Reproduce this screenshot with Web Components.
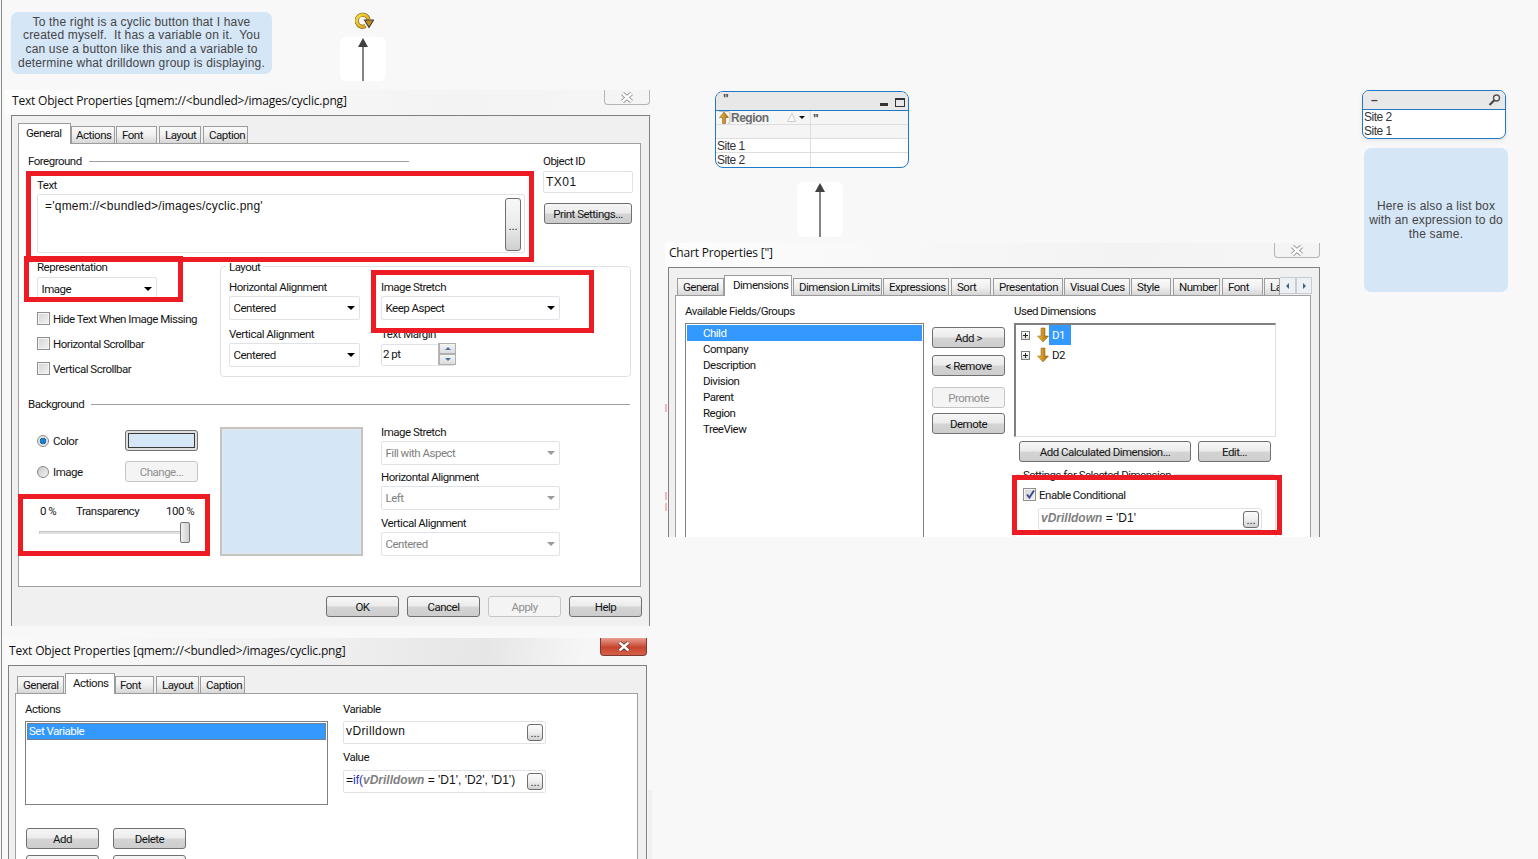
<!DOCTYPE html>
<html><head><meta charset="utf-8"><title>Cyclic</title>
<style>html,body{margin:0;padding:0;background:#f8f8f8}</style></head>
<body><q-page></q-page>
<script>
const B=':host{box-sizing:border-box}*{box-sizing:border-box}';
function def(name,fn){customElements.define(name,class extends HTMLElement{connectedCallback(){if(this.shadowRoot)return;const r=this.attachShadow({mode:'open'});r.innerHTML=fn(this)}})}
const esc=s=>s.replace(/&/g,'&amp;').replace(/</g,'&lt;').replace(/>/g,'&gt;');
const GOLD=`<defs><linearGradient id="g" x1="0" x2="1"><stop offset="0" stop-color="#f0c040"/><stop offset="1" stop-color="#a8680c"/></linearGradient></defs>`;
def('q-label',()=>`<style>${B}:host{display:block;height:14px;line-height:14px;white-space:nowrap}</style><slot></slot>`);
def('q-btn',e=>`<style>${B}:host{display:flex;align-items:center;justify-content:center;width:73px;height:21px;border:1px solid #707070;border-radius:3px;background:linear-gradient(#f6f6f6,#ececec 45%,#d4d4d4 55%,#cdcdcd);white-space:nowrap;flex:none}
:host([disabled]){border-color:#c6c6c6;background:#f4f4f4;color:#8f8f8f}</style><slot></slot>`);
def('q-dots',()=>`<style>${B}:host{display:flex;align-items:flex-end;justify-content:center;width:16px;height:17px;border:1px solid #6f6f6f;border-radius:3px;background:linear-gradient(#fbfbfb,#eee 50%,#d0d0d0);font:11px/11px "Liberation Sans",sans-serif;letter-spacing:0;color:#222;padding-bottom:1px;flex:none}</style>...`);
def('q-select',()=>`<style>${B}:host{display:flex;align-items:center;justify-content:space-between;height:24px;border:1px solid #dfe3e8;border-radius:2px;background:#fff;padding:0 4px 1px 3.5px;flex:none}
i{width:0;height:0;border:4px solid transparent;border-top:4px solid #000;border-bottom:0;margin-top:1px}
:host([disabled]){color:#7f7f7f}:host([disabled]) i{border-top-color:#9a9a9a}</style><span><slot></slot></span><i></i>`);
def('q-input',()=>`<style>${B}:host{display:flex;align-items:center;justify-content:space-between;height:22px;border:1px solid #dfe3e8;border-radius:2px;background:#fff;padding:0 2px;flex:none}</style><span><slot></slot></span><slot name="end"></slot>`);
def('q-check',e=>`<style>${B}:host{display:flex;align-items:center;height:13px;gap:3px;white-space:nowrap}
b{display:block;width:13px;height:13px;border:1px solid #8e8f8f;background:linear-gradient(135deg,#d4d4d4,#f2f2f2);box-shadow:inset 0 0 0 1px #f4f4f4;flex:none;position:relative}
svg{position:absolute;left:1px;top:0}</style><b><svg width="11" height="11" viewBox="0 0 11 11" style="display:${e.hasAttribute('checked')?'block':'none'}"><path d="M2 5.5l2.4 3L9 1.5" fill="none" stroke="#3e4e96" stroke-width="2"/></svg></b><slot></slot>`);
def('q-radio',e=>`<style>${B}:host{display:flex;align-items:center;gap:4px;white-space:nowrap}
b{display:block;width:12px;height:12px;border:1px solid #8a8a8a;border-radius:50%;background:${e.hasAttribute('checked')?'radial-gradient(circle,#1f7fc4 0 2.6px,#0b4f86 3px,#e4e4e4 3.6px,#f4f4f4)':'linear-gradient(135deg,#c8c8c8,#f4f4f4)'};flex:none}</style><b></b><slot></slot>`);
def('q-heading',()=>`<style>${B}:host{display:flex;align-items:center;height:14px;gap:7px;white-space:nowrap}i{flex:1;height:1px;background:#a0a0a0}</style><slot></slot><i></i>`);
def('q-tab',()=>`<style>${B}:host{display:flex;align-items:center;height:18px;padding-left:5px;border:1px solid #9c9c9c;background:linear-gradient(#fafafa,#f0f0f0 50%,#d6d6d6);white-space:nowrap;overflow:hidden;flex:none}
:host([active]){height:21px;background:#fff;border-bottom:0;padding-bottom:3px}</style><slot></slot>`);
def('q-red',()=>`<style>${B}:host{display:block;position:absolute;border:5px solid #ed1c24;z-index:5;pointer-events:none}</style>`);
def('q-arrowbox',()=>`<style>${B}:host{display:block;position:absolute;background:#fff;border-radius:6px}
svg{display:block;width:100%;height:100%}</style><svg><line x1="50%" y1="8" x2="50%" y2="100%" stroke="#333" stroke-width="1.2"/><polygon points="23,1 18,10 28,10" fill="#404040"/></svg>`);
def('q-note',()=>`<style>${B}:host{display:flex;position:absolute;align-items:center;justify-content:center;text-align:center;background:#d5e6f7;border-radius:7px;color:#444;font:12px/13.7px "Liberation Sans",sans-serif;letter-spacing:.18px;white-space:nowrap}</style><div><slot></slot></div>`);
def('q-win',e=>`<style>${B}:host{display:block;position:absolute;overflow:hidden}
.t{display:flex;justify-content:space-between;align-items:flex-start;height:var(--th,25px);background:var(--tb,linear-gradient(100deg,#fdfdfd,#f3f3f3 70%,#f6f6f6));padding-left:var(--tl,7px)}
.n{font:12px/var(--lh,22px) "Open Sans",sans-serif;letter-spacing:var(--ts,-.2px);white-space:nowrap;color:#111;padding-top:var(--tp,0)}
.c{width:46px;height:15px;border:1px solid #b4b4b4;border-top:0;border-radius:0 0 4px 4px;background:#f4f4f4;display:flex;align-items:center;justify-content:center;flex:none}
:host([red]) .c{width:47px;height:18px;border-color:#7a3a30;background:linear-gradient(#e8a090,#c8452f 55%,#d8604c)}
.b{margin-left:var(--bl,6px);border:1px solid #808080;background:#f0f0f0;padding:7px 0 0 6px;height:100%}</style>
<div class="t"><div class="n">${esc(e.getAttribute('name'))}</div><div class="c"><svg width="14" height="11" viewBox="0 0 14 11"><path d="M2.5 1.5l9 8M11.5 1.5l-9 8" stroke="${e.hasAttribute('red')?'#7a2a20':'#8a8a8a'}" stroke-width="4.2"/><path d="M2.5 1.5l9 8M11.5 1.5l-9 8" stroke="#fff" stroke-width="2.4" fill="none"/></svg></div></div>
<div class="b"><slot></slot></div>`);
const FORM=`*{box-sizing:border-box}
:host{display:block}
.tabs{display:flex;align-items:flex-end;height:21px;margin-bottom:-1px;position:relative;z-index:1}
.panel{background:#fff;border:1px solid #a0a0a0;position:relative}
.row{display:flex;align-items:flex-start}.col{display:flex;flex-direction:column;align-items:flex-start;flex:none}
.ar{font:12px "Liberation Sans",sans-serif;letter-spacing:0}
.up{display:block;padding-bottom:3px}
.exp i{font-weight:bold;color:#808080;font-style:italic}`;
const ARROW=`<svg width="12" height="16" viewBox="0 0 12 16" style="flex:none"><path d="M4 1h4v8h3.5L6 15 .5 9H4z" fill="url(#g)" stroke="#8a5a10" stroke-width=".5"/></svg>`;
def('q-textgeneral',()=>`<style>${FORM}
.panel{width:623px;height:444px;padding:10px 0 0 9px}
.grp{position:relative;width:411px;height:111px;margin-top:6px;border:1px solid #dde1e6;border-radius:4px;padding:13px 0 0 8px}
.lg{position:absolute;left:5px;top:-7px;background:#fff;padding:0 3px}
.prev{width:143px;height:129px;margin-top:16px;border:2px solid #c4c4c4;background:#d5e6f7;box-shadow:inset 0 0 0 1px #e6e6e6}
.swatch{width:73px;height:21px;border:1px solid #707070;border-radius:3px;background:#e0e0e0;padding:2px}
.swatch b{display:block;height:100%;background:#d5e6f7;border:1px solid #3a3a3a}
.slider{position:relative;width:151px;height:21px;margin-top:4px;display:flex;align-items:center}
.slider u{display:block;width:100%;height:3px;background:#e4e4e4;border:1px solid #c4c4c4;border-bottom-color:#ddd}
.slider s{position:absolute;left:141px;top:0;width:10px;height:21px;border:1px solid #777;border-radius:2px;background:linear-gradient(90deg,#f0f0f0,#d0d0d0)}
.spin{display:flex;flex-direction:column;width:18px;height:22px;border-left:1px solid #b8b8b8;margin-right:-2px}
.spin b{flex:1;border:1px solid #b0b0b0;background:linear-gradient(#f4f4f4,#dcdcdc);display:flex;align-items:center;justify-content:center}
.spin i{width:0;height:0;border:3px solid transparent}
.foot{display:flex;justify-content:flex-end;gap:8px;width:624px;margin-top:9px}
</style>
<div class="tabs"><q-tab active style="width:53px;padding-left:7px">General</q-tab><q-tab style="width:44px;padding-left:4px">Actions</q-tab><q-tab style="width:41px;margin-left:1px;">Font</q-tab><q-tab style="width:42px;margin-left:2px">Layout</q-tab><q-tab style="width:45px;margin-left:2px">Caption</q-tab></div>
<div class="panel">
 <div class="row">
  <div class="col" style="width:515px">
   <q-heading style="width:381px">Foreground</q-heading>
   <q-label style="margin:10px 0 0 9px">Text</q-label>
   <div class="ar" style="margin:2px 0 0 9px;width:488px;height:59px;border:1px solid #dfe3e8;border-radius:2px;display:flex;justify-content:space-between;padding:3px 3px 3px 7px"><span style="padding-top:1px;letter-spacing:.22px">='qmem://&lt;bundled&gt;/images/cyclic.png'</span><q-dots style="height:53px;width:16px;align-items:center;padding:4px 0 0;background:linear-gradient(#f8f8f8,#ececec 50%,#cfcfcf)"></q-dots></div>
  </div>
  <div class="col">
   <q-label>Object ID</q-label>
   <q-input class="ar" style="width:90px;margin-top:3px;letter-spacing:.5px">TX01</q-input>
   <q-btn style="width:88px;margin:10px 0 0 1px">Print Settings...</q-btn>
  </div>
 </div>
 <div class="row" style="margin:7px 0 0 9px">
  <div class="col" style="width:183px">
   <q-label>Representation</q-label>
   <q-select style="width:120px;margin-top:3px">Image</q-select>
   <q-check style="margin-top:11px">Hide Text When Image Missing</q-check>
   <q-check style="margin-top:12px">Horizontal Scrollbar</q-check>
   <q-check style="margin-top:12px">Vertical Scrollbar</q-check>
  </div>
  <div class="grp">
   <q-label class="lg">Layout</q-label>
   <div class="row">
    <div class="col" style="width:152px">
     <q-label>Horizontal Alignment</q-label><q-select style="width:131px;margin-top:2px">Centered</q-select>
     <q-label style="margin-top:7px">Vertical Alignment</q-label><q-select style="width:131px;margin-top:2px">Centered</q-select>
    </div>
    <div class="col">
     <q-label>Image Stretch</q-label><q-select style="width:179px;margin-top:2px">Keep Aspect</q-select>
     <q-label style="margin-top:7px">Text Margin</q-label>
     <q-input style="width:74px;margin-top:3px;padding:0 0 2px 1px">2 pt<span slot="end" class="spin"><b><i style="border-bottom-color:#4a6ea8;border-top:0"></i></b><b><i style="border-top-color:#4a6ea8;border-bottom:0"></i></b></span></q-input>
    </div>
   </div>
  </div>
 </div>
 <q-heading style="width:602px;margin-top:20px">Background</q-heading>
 <div class="row" style="margin-left:9px">
  <div class="col" style="width:183px">
   <div class="row" style="margin-top:19px;align-items:center;width:161px;justify-content:space-between"><q-radio checked>Color</q-radio><div class="swatch"><b></b></div></div>
   <div class="row" style="margin-top:10px;align-items:center;width:161px;justify-content:space-between"><q-radio>Image</q-radio><q-btn disabled>Change...</q-btn></div>
   <div class="row" style="margin:22px 0 0 3px"><q-label style="width:36px">0 %</q-label><q-label style="width:90px">Transparency</q-label><q-label>100 %</q-label></div>
   <div class="slider" style="margin-left:2px"><u></u><s></s></div>
  </div>
  <div class="prev"></div>
  <div class="col" style="margin:14px 0 0 18px">
   <q-label>Image Stretch</q-label><q-select disabled style="width:179px;margin-top:2px">Fill with Aspect</q-select>
   <q-label style="margin-top:5px">Horizontal Alignment</q-label><q-select disabled style="width:179px;margin-top:2px">Left</q-select>
   <q-label style="margin-top:6px">Vertical Alignment</q-label><q-select disabled style="width:179px;margin-top:2px">Centered</q-select>
  </div>
 </div>
</div>
<div class="foot"><q-btn>OK</q-btn><q-btn>Cancel</q-btn><q-btn disabled>Apply</q-btn><q-btn>Help</q-btn></div>`);
def('q-textactions',()=>`<style>${FORM}
.panel{width:623px;height:240px;padding:8px 0 0 9px}
.lb{width:303px;height:84px;margin-top:5px;border:1px solid #808080;padding:1px}
.sel{height:17px;background:#3399ff;color:#fff;outline:1px dotted #b56a2a;outline-offset:-1px;padding-left:2px;line-height:16px}
</style>
<div class="tabs" style="margin-left:2px"><q-tab style="width:47px">General</q-tab><q-tab active style="width:50px;margin-left:1px;padding-left:7px">Actions</q-tab><q-tab style="width:39px;padding-left:4px">Font</q-tab><q-tab style="width:43px;margin-left:2px">Layout</q-tab><q-tab style="width:45px;margin-left:1px">Caption</q-tab></div>
<div class="panel"><div class="row">
 <div class="col">
  <q-label>Actions</q-label>
  <div class="lb"><div class="sel">Set Variable</div></div>
  <div class="row" style="margin:23px 0 0 1px;gap:14px"><q-btn>Add</q-btn><q-btn>Delete</q-btn></div>
  <div class="row" style="margin:6px 0 0 1px;gap:14px"><q-btn></q-btn><q-btn></q-btn></div>
 </div>
 <div class="col" style="margin-left:15px">
  <q-label>Variable</q-label>
  <q-input class="ar" style="width:203px;height:23px;margin-top:5px;padding-right:2px;letter-spacing:.4px"><span class="up">vDrilldown</span><q-dots slot="end"></q-dots></q-input>
  <q-label style="margin-top:6px">Value</q-label>
  <q-input class="ar exp" style="width:203px;height:23px;margin-top:6px;padding-right:2px"><span class="up">=<span style="color:#2a2ad0">if(</span><i>vDrilldown</i> = 'D1', 'D2', 'D1')</span><q-dots slot="end"></q-dots></q-input>
 </div>
</div></div>`);
def('q-chartdims',()=>`<style>${FORM}
.panel{width:636px;height:260px;padding:8px 0 0 9px}
.lb{width:239px;height:230px;margin-top:5px;border:1px solid #808080;padding:1px}
.it{height:16px;line-height:16px;padding-left:16px;white-space:nowrap}
.it.s{background:#3399ff;color:#fff}
.used{width:262px;height:114px;margin-top:5px;border:1px solid #e0e0e0;border-top:2px solid #808080;border-left:2px solid #808080;padding:0 0 0 5px}
.node{display:flex;align-items:center;height:20px}
.plus{width:9px;height:9px;border:1px solid #7f7f7f;background:linear-gradient(#fff,#ddd);position:relative;flex:none;margin-right:7px}
.plus:before{content:"";position:absolute;left:1px;top:3px;width:5px;height:1px;background:#222}
.plus:after{content:"";position:absolute;left:3px;top:1px;width:1px;height:5px;background:#222}
.node span{display:flex;align-items:center;height:20px;padding:0 4px 0 3px}
.node .s{background:#3399ff;color:#fff;width:22px}
.sg{position:relative;width:262px;height:80px;margin-top:12px;border:1px solid #dcdcdc;border-radius:3px;padding:13px 0 0 7px}
.lg{position:absolute;left:5px;top:-7px;background:#fff;padding:0 3px}
.ta{width:16px;height:17px;margin:0 0 2px 0;flex:none;border:1px solid #c8ccd2;border-left:0;background:#eef1f4;display:flex;align-items:center;justify-content:center}
.ta i{border:3px solid transparent}
</style>
<div class="tabs" style="margin-left:2px">${GOLD.replace('<defs>','<svg width="0" height="0" style="position:absolute"><defs>').replace('</defs>','</defs></svg>')}<q-tab style="width:47px">General</q-tab><q-tab active style="width:68px;padding-left:8px">Dimensions</q-tab><q-tab style="width:89px;margin-left:1px">Dimension Limits</q-tab><q-tab style="width:66px;margin-left:1px">Expressions</q-tab><q-tab style="width:40px;margin-left:2px">Sort</q-tab><q-tab style="width:70px;margin-left:2px">Presentation</q-tab><q-tab style="width:66px;margin-left:1px">Visual Cues</q-tab><q-tab style="width:40px;margin-left:1px">Style</q-tab><q-tab style="width:47px;margin-left:2px">Number</q-tab><q-tab style="width:41px;margin-left:2px">Font</q-tab><q-tab style="width:16px;margin-left:1px">La</q-tab><div class="ta"><i style="border-right-color:#47607f;border-left:0"></i></div><div class="ta" style="border-left:1px solid #c8ccd2"><i style="border-left-color:#47607f;border-right:0"></i></div></div>
<div class="panel"><div class="row">
 <div class="col">
  <q-label>Available Fields/Groups</q-label>
  <div class="lb"><div class="it s">Child</div><div class="it">Company</div><div class="it">Description</div><div class="it">Division</div><div class="it">Parent</div><div class="it">Region</div><div class="it">TreeView</div></div>
 </div>
 <div class="col" style="margin:23px 0 0 8px">
  <q-btn>Add &gt;</q-btn><q-btn style="margin-top:7px">&lt; Remove</q-btn><q-btn disabled style="margin-top:11px">Promote</q-btn><q-btn style="margin-top:5px">Demote</q-btn>
 </div>
 <div class="col" style="margin-left:9px">
  <q-label>Used Dimensions</q-label>
  <div class="used">
   <div class="node"><b class="plus"></b>${ARROW}<span class="s">D1</span></div>
   <div class="node"><b class="plus"></b>${ARROW}<span>D2</span></div>
  </div>
  <div class="row" style="margin:4px 0 0 5px;gap:7px"><q-btn style="width:172px">Add Calculated Dimension...</q-btn><q-btn>Edit...</q-btn></div>
  <div class="sg" style="padding-left:8px"><q-label class="lg">Settings for Selected Dimension</q-label>
   <q-check checked>Enable Conditional</q-check>
   <q-input class="ar exp" style="width:224px;margin:7px 0 0 15px;padding-right:2px"><span class="up" style="padding-bottom:2px"><i>vDrilldown</i> = 'D1'</span><q-dots slot="end"></q-dots></q-input>
  </div>
 </div>
</div></div>`);
def('q-chart',()=>`<style>${B}:host{display:block;position:absolute;border:1px solid #1f78c8;border-radius:8px;overflow:hidden;background:#fff;font:12px/14px "Liberation Sans",sans-serif;color:#333}
.c{display:flex;justify-content:space-between;height:19px;background:#e8e8e8;border-bottom:1px solid #1f78c8;font-weight:bold;color:#444;padding:1px 3px 0 7px;line-height:12px}
.ic{display:flex;align-items:flex-end;gap:7px;padding-bottom:4px}.min{width:8px;height:3px;background:#333}.max{width:10px;height:9px;border:1px solid #333;border-top-width:2px;margin-bottom:-1px}
.g{display:grid;grid-template-columns:95px 1fr}
.g>div{height:14px;border-bottom:1px solid #ddd;border-right:1px solid #ddd;padding:1px 0 0 1px;line-height:15px;white-space:nowrap;overflow:hidden;display:flex;align-items:center}
.g>div:nth-child(2n){border-right:0}.h{background:#f5f5f5}.g>div:nth-last-child(-n+2){border-bottom:0}
.rg{font-weight:bold;color:#6a6a6a;flex:1}
.tri{width:0;height:0;border:3px solid transparent;border-top:3px solid #111;border-bottom:0;margin:0 5px 0 3px}
</style>
<div class="c"><span>"</span><span class="ic"><span class="min"></span><span class="max"></span></span></div>
<div class="g"><div class="h" style="padding-top:0"><svg width="14" height="13" viewBox="0 0 14 13" style="flex:none">${GOLD}<path d="M2 .5h9q2 0 2 2v8q0 2-2 2" fill="none" stroke="#999" stroke-width=".6"/><path d="M6 1L1.5 6.5H4.5V12.5H7.5V6.5H10.5z" fill="url(#g)" stroke="#7a500c" stroke-width=".5" transform="translate(1)"/></svg><span class="rg" style="padding-top:1px">Region</span><svg width="9" height="9" viewBox="0 0 9 9"><path d="M.5 8.5h8L5 .5z" fill="#fafafa" stroke="#ccc"/></svg><i class="tri"></i></div><div class="h" style="font-weight:bold;color:#444;padding-left:2px;align-items:flex-start">"</div>
<div class="h"></div><div class="h"></div><div>Site 1</div><div></div><div>Site 2</div><div></div></div>`);
def('q-list',()=>`<style>${B}:host{display:block;position:absolute;border:1px solid #1f78c8;border-radius:7px;overflow:hidden;background:#fff;font:12px/14px "Liberation Sans",sans-serif;color:#333;box-shadow:0 2px 4px rgba(0,0,0,.08)}
.c{display:flex;justify-content:space-between;align-items:center;height:19px;background:#e8e8e8;border-bottom:1px solid #1f78c8;padding:0 4px 0 8px;font-weight:bold;color:#444}
.r{padding-left:1px}</style><div class="c"><span>–</span><svg width="13" height="12" viewBox="0 0 13 12"><circle cx="8.5" cy="4" r="3" fill="#eee" stroke="#555" stroke-width="1.4"/><path d="M6.3 6.3L1.5 11" stroke="#444" stroke-width="2"/></svg></div><div class="r">Site 2</div><div class="r">Site 1</div>`);
def('q-page',()=>`<style>${B}:host{display:block;position:relative;width:1538px;height:859px;overflow:hidden;background:#f8f8f8;font:11.5px Roboto,sans-serif;letter-spacing:-.5px;color:#141414}
.vl{position:absolute;left:1px;top:0;bottom:0;width:1px;background:#8a8a8a}
.sh{position:absolute;left:648px;top:790px;width:4px;height:69px;background:#efefef}
.pk{position:absolute;left:665px;width:2px;background:#f4b8bc}
.cy{position:absolute;left:355px;top:12px}</style>
<div class="vl"></div><div class="sh"></div>
<div class="pk" style="top:404px;height:8px"></div><div class="pk" style="top:492px;height:8px"></div><div class="pk" style="top:503px;height:8px"></div>
<q-note style="left:11px;top:12px;width:261px;height:62px">To the right is a cyclic button that I have<br>created myself.&nbsp; It has a variable on it.&nbsp; You<br>can use a button like this and a variable to<br>determine what drilldown group is displaying.</q-note>
<svg class="cy" width="19" height="17" viewBox="0 0 19 17"><defs><linearGradient id="c" x1="0" y1="0" x2="1" y2="1"><stop offset="0" stop-color="#f8dc40"/><stop offset="1" stop-color="#d89a10"/></linearGradient></defs><path d="M10.5 14A6 6 0 1 1 13.6 7.5" fill="none" stroke="#6a5418" stroke-width="4"/><path d="M10.5 14A6 6 0 1 1 13.6 7.5" fill="none" stroke="url(#c)" stroke-width="3"/><path d="M9.5 8H18.5L14 15.5z" fill="#c89018" stroke="#3a3a3a" stroke-width="1.1"/></svg>
<q-arrowbox style="left:340px;top:37px;width:46px;height:44px"></q-arrowbox>
<q-arrowbox style="left:797px;top:182px;width:46px;height:55px"></q-arrowbox>
<q-chart style="left:715px;top:91px;width:194px;height:77px"></q-chart>
<q-list style="left:1362px;top:90px;width:144px;height:49px"></q-list>
<q-note style="left:1364px;top:148px;width:144px;height:144px;padding-top:2px">Here is also a list box<br>with an expression to do<br>the same.</q-note>
<q-win name="Text Object Properties [qmem://&lt;bundled&gt;/images/cyclic.png]" style="left:5px;top:90px;width:645px;height:536px"><q-textgeneral></q-textgeneral></q-win>
<q-win red name="Text Object Properties [qmem://&lt;bundled&gt;/images/cyclic.png]" style="left:3px;top:638px;width:644px;height:221px;--th:27px;--tl:6px;--bl:5px;--tp:2px;--ts:-.17px;--tb:linear-gradient(95deg,#fafafa,#f3f3f3 40%,#e6e6e6 75%,#f6f6f6 90%)"><q-textactions></q-textactions></q-win>
<q-win name="Chart Properties [&quot;]" style="left:665px;top:243px;width:655px;height:294px;--th:24px;--tl:4px;--bl:3px;--lh:20px"><q-chartdims></q-chartdims></q-win>
<q-red style="left:26px;top:171px;width:508px;height:91px"></q-red>
<q-red style="left:24px;top:256px;width:159px;height:46px"></q-red>
<q-red style="left:371px;top:270px;width:223px;height:63px"></q-red>
<q-red style="left:18px;top:494px;width:192px;height:62px"></q-red>
<q-red style="left:1012px;top:475px;width:270px;height:60px"></q-red>`);
</script></body></html>
